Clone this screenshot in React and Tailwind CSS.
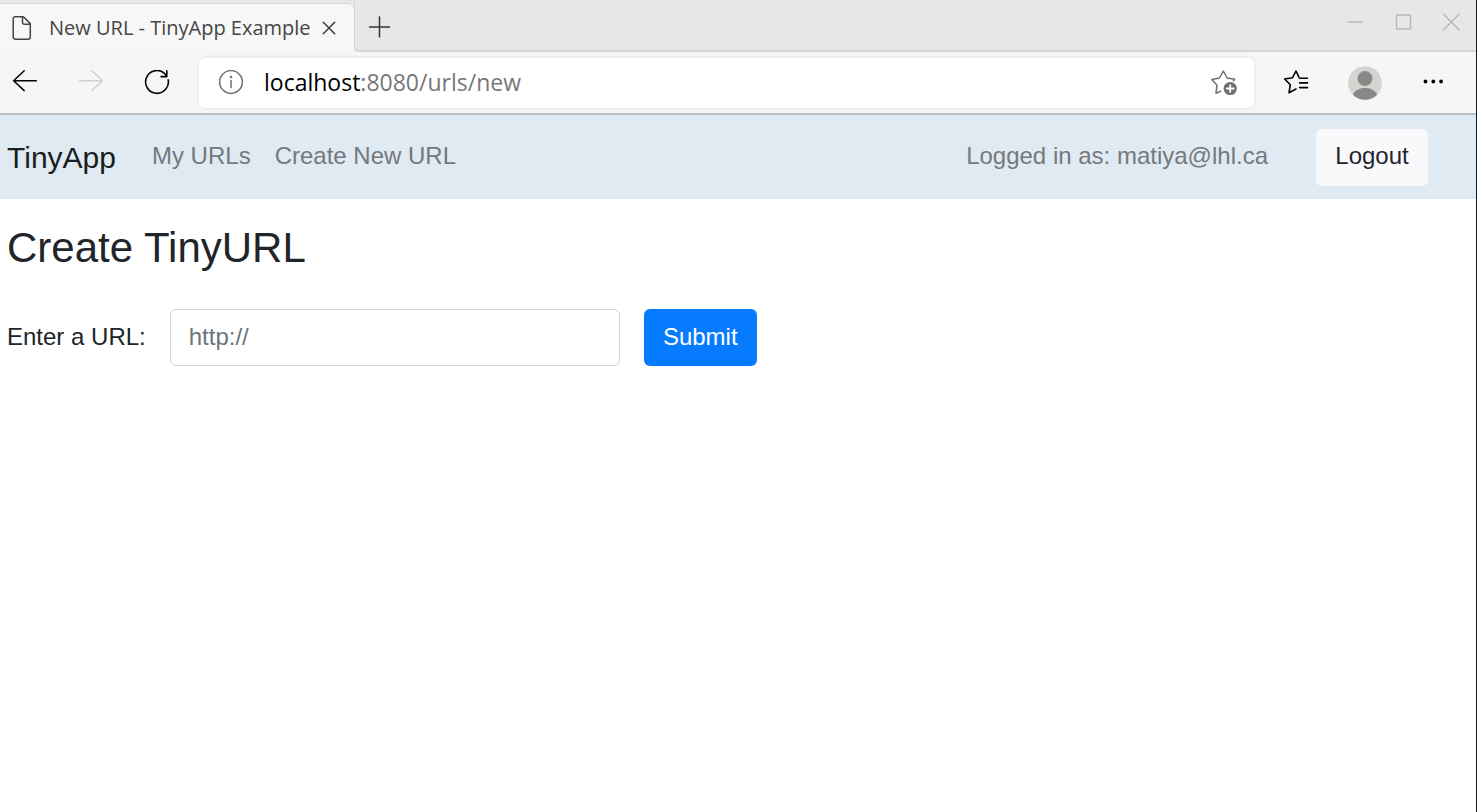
import React from "react";

const stroke = { fill: "none", stroke: "currentColor", strokeLinecap: "round", strokeLinejoin: "round" };

function TabStrip() {
  return (
    <div className="flex h-[52px] bg-[#e7e7e7]">
      <div className="mt-[3px] flex w-[354px] shrink-0 items-center rounded-tr-md border-t border-[#d6d6d6] bg-[#f7f7f7] pl-3 text-[#454545]">
        <svg className="size-[26px] shrink-0" viewBox="0 0 26 26" strokeWidth="1.5" {...stroke}>
          <path d="M3.4 1.7H11.4L18.3 8.6V22a2.2 2.2 0 0 1-2.2 2.2H3.4a2.2 2.2 0 0 1-2.2-2.2V3.9a2.2 2.2 0 0 1 2.2-2.2z" />
          <path d="M10.5 1.7V7.3a2 2 0 0 0 2 2H18.3" />
        </svg>
        <span className="ml-[11px] flex-1 whitespace-nowrap text-[20px] leading-6">New URL - TinyApp Example</span>
        <button type="button" aria-label="Close tab" className="mr-[17px] text-[#333]">
          <svg className="size-4" viewBox="0 0 16 16" strokeWidth="1.4" {...stroke}>
            <path d="M2.3 2.3 13.7 13.7M13.7 2.3 2.3 13.7" />
          </svg>
        </button>
      </div>
      <div className="flex flex-1 justify-between rounded-bl-md border-b-2 border-l border-[#d6d6d6] bg-[#e7e7e7] pr-[14px] pl-[13px]">
        <button type="button" aria-label="New tab" className="pt-1 text-[#333]">
          <svg className="size-6" viewBox="0 0 24 24" strokeWidth="1.5" {...stroke}>
            <path d="M11.5 2V22M1.5 12H21.5" />
          </svg>
        </button>
        <div className="flex h-11 items-center gap-7 text-[#b9b9b9]">
          <button type="button" aria-label="Minimize">
            <svg className="size-5" viewBox="0 0 20 20" strokeWidth="1.5" {...stroke}>
              <path d="M2.5 10H16.5" />
            </svg>
          </button>
          <button type="button" aria-label="Maximize">
            <svg className="size-5" viewBox="0 0 20 20" strokeWidth="1.5" {...stroke}>
              <rect x="2.5" y="3" width="14" height="14" rx="0.5" />
            </svg>
          </button>
          <button type="button" aria-label="Close window">
            <svg className="size-5" viewBox="0 0 20 20" strokeWidth="1.5" {...stroke}>
              <path d="M1.7 2.2 17 17.8M17 2.2 1.7 17.8" />
            </svg>
          </button>
        </div>
      </div>
    </div>
  );
}

function Toolbar() {
  return (
    <div className="flex items-center border-b-2 border-[#babcc0] bg-[#f6f6f6] pt-[6px] pb-[5px] pr-[31px] pl-3">
      <div className="flex shrink-0 items-center gap-10 text-black">
        <button type="button" aria-label="Back">
          <svg className="size-[26px]" viewBox="0 0 26 26" strokeWidth="1.5" {...stroke}>
            <path d="M12.2 .8 1.6 10.8 12.2 20.6M1.6 10.8H24.3" />
          </svg>
        </button>
        <button type="button" aria-label="Forward" className="text-[#cfcfcf]">
          <svg className="size-[26px]" viewBox="0 0 26 26" strokeWidth="1.5" {...stroke}>
            <path d="M13.8 .8 24.4 10.8 13.8 20.6M24.4 10.8H1.7" />
          </svg>
        </button>
        <button type="button" aria-label="Refresh">
          <svg className="size-[26px]" viewBox="0 0 26 26" strokeWidth="1.6" {...stroke}>
            <path d="M24.2 9.8A11.4 11.4 0 1 1 19.8 2.8L22.8 6M22.8 .8V6.6H17" />
          </svg>
        </button>
      </div>
      <div className="ml-[29px] flex h-[50px] flex-1 items-center rounded-md bg-white pr-4 pl-5 shadow-[0_0_4px_rgba(0,0,0,0.08)]">
        <svg className="size-[26px] shrink-0 text-[#6e6e6e]" viewBox="0 0 26 26" strokeWidth="1.5" {...stroke}>
          <circle cx="12" cy="12" r="11.4" />
          <path d="M12 10.5V17.5" />
          <circle cx="12" cy="7.1" r="0.5" fill="currentColor" />
        </svg>
        <a href="#address" className="ml-[19px] flex-1 whitespace-nowrap pb-[2px] text-[23px] leading-8 text-[#777]">
          <span className="text-black">localhost</span>:8080/urls/new
        </a>
        <button type="button" aria-label="Add to favorites" className="text-[#707070]">
          <svg className="size-7" viewBox="0 0 28 28" strokeWidth="1.5" {...stroke}>
            <path d="M10.7 22.2 6 24.2 7 16.3 1.9 10.4 9.4 9 13.3 2 17.2 9 24.6 10.3 23.4 11.8" />
            <circle cx="20.2" cy="19.5" r="6.6" fill="currentColor" stroke="none" />
            <path d="M20.2 16.1V22.9M16.8 19.5H23.6" stroke="white" strokeWidth="1.8" />
          </svg>
        </button>
      </div>
      <div className="ml-7 flex shrink-0 items-center text-black">
        <button type="button" aria-label="Favorites">
          <svg className="size-7" viewBox="0 0 28 28" strokeWidth="1.6" {...stroke}>
            <path d="M17.6 9.2H25.5M17.6 13.9H25.5M17.6 18.6H25.5" />
            <path d="M16.9 8.2 14 2 10.4 8.8 2.7 10 8.3 15.8 7 23.8 14 20" />
          </svg>
        </button>
        <button type="button" aria-label="Profile" className="ml-9">
          <svg className="size-[38px]" viewBox="0 0 38 38">
            <clipPath id="avatar-clip"><circle cx="19" cy="19" r="16.8" /></clipPath>
            <circle cx="19" cy="19" r="16.8" fill="#d5d4d1" />
            <circle cx="19" cy="14.5" r="7.4" fill="#8a8886" />
            <ellipse cx="19" cy="33" rx="12.4" ry="9.2" fill="#8a8886" clipPath="url(#avatar-clip)" />
          </svg>
        </button>
        <button type="button" aria-label="Settings and more" className="ml-[37px]">
          <svg className="size-6" viewBox="0 0 24 24" fill="currentColor">
            <circle cx="4.5" cy="10.5" r="1.9" />
            <circle cx="12.3" cy="10.5" r="1.9" />
            <circle cx="20.1" cy="10.5" r="1.9" />
          </svg>
        </button>
      </div>
    </div>
  );
}

function Navbar() {
  return (
    <nav className="flex items-center bg-[#e0eaf2] pt-[14px] pb-[13px] pr-12 pl-[7px] text-[24px] leading-9 text-[#74797e]">
      <a href="#home" className="text-[30px] text-[#1b1e21]">TinyApp</a>
      <div className="ml-9 flex gap-6 pb-[3px]">
        <a href="#urls">My URLs</a>
        <a href="#new">Create New URL</a>
      </div>
      <form className="ml-auto flex items-center gap-12" onSubmit={(e) => e.preventDefault()}>
        <span className="pb-[3px]">Logged in as: matiya@lhl.ca</span>
        <button type="submit" className="h-[57px] min-w-28 rounded-md bg-[#f9f9fc] px-[19px] pb-[3px] text-[#212529]">Logout</button>
      </form>
    </nav>
  );
}

export default function App() {
  return (
    <div className="flex min-h-screen flex-col border-r border-[#141c26] bg-white">
      <header className="font-['Open_Sans','Noto_Sans',sans-serif]">
        <TabStrip />
        <Toolbar />
      </header>
      <div className="font-['Liberation_Sans',Arial,sans-serif]">
        <Navbar />
        <main className="px-[7px] pt-6 text-[24px] leading-9 text-[#212529]">
          <h1 className="text-[42px] leading-[50px]">Create TinyURL</h1>
          <form className="mt-9 flex items-center gap-6" onSubmit={(e) => e.preventDefault()}>
            <label htmlFor="longURL" className="pb-[2px]">Enter a URL:</label>
            <input
              id="longURL"
              type="text"
              placeholder="http://"
              className="h-[57px] w-[450px] rounded-md border border-[#ced4da] bg-white px-[18px] pb-[2px] placeholder:text-[#6c757d]"
            />
            <button type="submit" className="h-[57px] min-w-[113px] rounded-md bg-[#077bff] px-[19px] pb-[2px] text-white">Submit</button>
          </form>
        </main>
      </div>
    </div>
  );
}
